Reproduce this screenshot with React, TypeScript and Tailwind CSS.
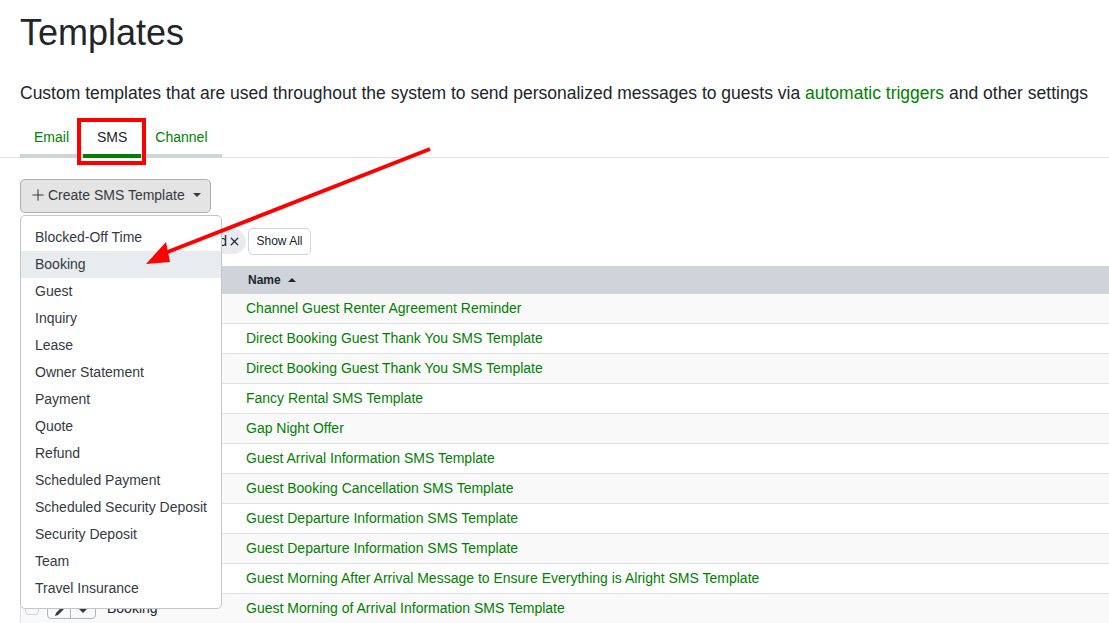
import { Plus, X } from 'lucide-react'

const menuItems = [
  'Blocked-Off Time',
  'Booking',
  'Guest',
  'Inquiry',
  'Lease',
  'Owner Statement',
  'Payment',
  'Quote',
  'Refund',
  'Scheduled Payment',
  'Scheduled Security Deposit',
  'Security Deposit',
  'Team',
  'Travel Insurance',
]

const templates = [
  'Channel Guest Renter Agreement Reminder',
  'Direct Booking Guest Thank You SMS Template',
  'Direct Booking Guest Thank You SMS Template',
  'Fancy Rental SMS Template',
  'Gap Night Offer',
  'Guest Arrival Information SMS Template',
  'Guest Booking Cancellation SMS Template',
  'Guest Departure Information SMS Template',
  'Guest Departure Information SMS Template',
  'Guest Morning After Arrival Message to Ensure Everything is Alright SMS Template',
  'Guest Morning of Arrival Information SMS Template',
]

function Caret({ up }: { up?: boolean }) {
  return (
    <svg width="8" height="4" viewBox="0 0 8 4" className="fill-current">
      <path d={up ? 'M0 4 L4 0 L8 4 Z' : 'M0 0 L8 0 L4 4 Z'} />
    </svg>
  )
}

export default function App() {
  return (
    <div className="relative h-[623px] w-[1109px] overflow-hidden bg-white font-['Liberation_Sans',Arial,sans-serif] text-[#212529]">
      <h1 className="pl-5 pt-[11px] text-[36px] leading-[43px]">Templates</h1>
      <p className="mt-[26px] whitespace-nowrap pl-5 text-[17.5px] leading-[26px]">
        Custom templates that are used throughout the system to send personalized messages to guests via{' '}
        <span className="text-[#008000]">automatic triggers</span> and other settings
      </p>

      <div className="mt-[14px] flex h-[38px] border-b border-[#dee2e6] pl-5 text-[14px]">
        <div className="flex h-[38px] border-b-[4px] border-[#ced4da]">
          <span className="flex h-[34px] items-center px-[14px] text-[#008000]">Email</span>
          <span className="-mb-[4px] flex h-[38px] items-center border-b-[4px] border-[#008000] px-[14px]">SMS</span>
          <span className="flex h-[34px] items-center px-[14px] text-[#008000]">Channel</span>
        </div>
      </div>

      <div className="pl-5 pt-[21px]">
        <button className="flex h-[34px] w-[191px] items-center rounded-[5px] border border-[#adadad] bg-[#e4e4e4] pb-[2px] pl-[8px] text-[14px] text-[#343a40]">
          <Plus className="mr-[1px] h-[18px] w-[18px]" strokeWidth={1.4} />
          Create SMS Template
          <span className="ml-[8px]"><Caret /></span>
        </button>

        <div className="mt-[15px] flex h-[27px] items-center justify-end gap-[2px] pr-[798px] text-[12px]">
          <span className="flex h-[25px] items-center gap-[1px] rounded-r-full bg-[#e9ecef] pr-[5px] text-[14px]">
            d <X className="h-[13px] w-[13px]" strokeWidth={2.2} />
          </span>
          <button className="h-[27px] rounded-[5px] border border-[#ced4da] px-[7.5px] pb-[2px]">Show All</button>
        </div>
      </div>

      <div className="mt-[11px] ml-5 border-l border-[#dee2e6] text-[14px]">
        <div className="flex h-[28px] items-center bg-[#ced4da] pl-[227px] text-[12px] font-bold">
          Name
          <span className="ml-[7px]"><Caret up /></span>
        </div>
        {templates.map((name, i) => (
          <div
            key={i}
            className={`flex h-[30px] items-center border-b border-[#dee2e6] pl-[225px] text-[#008000] ${i % 2 === 0 ? 'bg-[#f9f9f9]' : 'bg-white'}`}
          >
            {name}
          </div>
        ))}
      </div>

      {/* row peeking out below the dropdown */}
      <div className="absolute left-[25px] top-[597px] flex items-center text-[14px]">
        <span className="h-[14px] w-[14px] rounded-sm border border-[#ced4da]" />
        <span className="ml-[8px] flex h-[22px] w-[49px] rounded-b border border-[#adb5bd]">
          <span className="flex w-[23px] items-center justify-center border-r border-[#adb5bd] pt-[6px]">
            <svg width="11" height="11" viewBox="0 0 11 11" className="fill-[#343a40]"><path d="M8 1 L10 3 L4 9 L1 10 L2 7 Z" /></svg>
          </span>
          <span className="flex flex-1 items-center justify-center pt-[6px] text-[#343a40]"><Caret /></span>
        </span>
        <span className="ml-[11px]">Booking</span>
      </div>

      {/* dropdown */}
      <div className="absolute left-5 top-[215px] w-[202px] rounded-[5px] border border-[#c2c6ca] bg-white pb-[6px] pt-[8px] text-[14px] text-[#343a40]">
        {menuItems.map((item) => (
          <div key={item} className={`flex h-[27px] items-center pl-[14px] ${item === 'Booking' ? 'bg-[#e9ecef]' : ''}`}>
            {item}
          </div>
        ))}
      </div>

      {/* annotations */}
      <div className="absolute left-[77px] top-[118px] h-[47px] w-[69px] border-[4px] border-[#ff0000]" />
      <svg className="absolute left-0 top-0" width="1109" height="623" viewBox="0 0 1109 623">
        <line x1="430" y1="149" x2="165" y2="253" stroke="#ff0000" strokeWidth="4" />
        <path d="M146 264 L166 242 L170 262 Z" fill="#ff0000" />
      </svg>
    </div>
  )
}
